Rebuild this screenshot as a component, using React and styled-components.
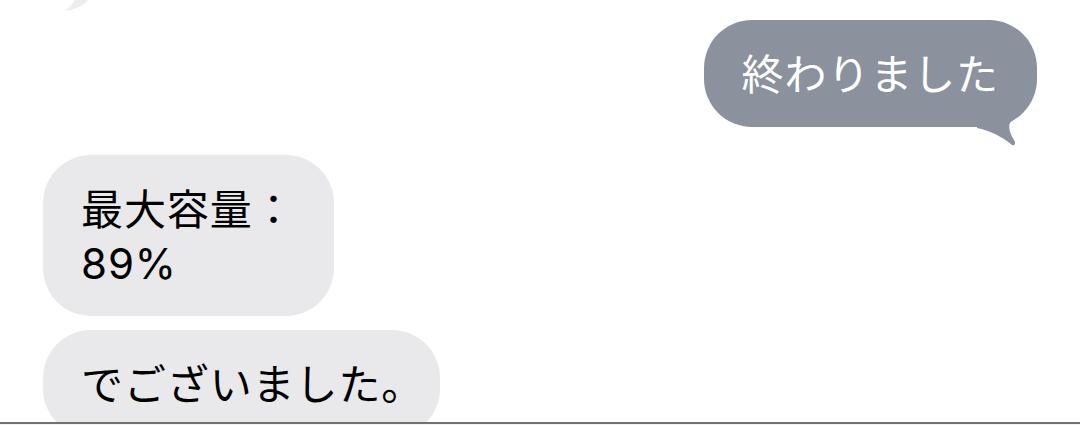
import styled, { createGlobalStyle } from 'styled-components';

const GlobalStyle = createGlobalStyle`
  html, body {
    margin: 0;
    padding: 0;
    background: #ffffff;
  }
  body {
    font-family: Inter, "Noto Sans CJK JP", sans-serif;
  }
`;

const Screen = styled.div`
  width: 1080px;
  height: 425px;
  display: flex;
  flex-direction: column;
  overflow: hidden;
  background: #ffffff;
`;

const Thread = styled.div`
  height: 422px;
  overflow: hidden;
  display: flex;
  flex-direction: column;
  padding: 0 43px;
`;

// tail of the previous (cut off) incoming bubble
const Sliver = styled.svg`
  display: block;
  margin-left: 20px;
  flex-shrink: 0;
`;

const Row = styled.div`
  display: flex;
  justify-content: ${(p) => (p.$mine ? 'flex-end' : 'flex-start')};
  margin-top: ${(p) => p.$gap}px;
  flex-shrink: 0;
`;

const Bubble = styled.div`
  position: relative;
  padding: 28px ${(p) => p.$endPad || 38}px 25px 38px;
  border-radius: 48px;
  background: ${(p) => (p.$mine ? '#8b929e' : '#e9e9eb')};
  color: ${(p) => (p.$mine ? '#ffffff' : '#000000')};
  font-size: 42px;
  line-height: 54px;
  letter-spacing: 0.9px;
  font-weight: 400;
  white-space: pre-line;
`;

const Tail = styled.svg`
  position: absolute;
  right: 0;
  bottom: -20px;
`;

const Footer = styled.div`
  height: 3px;
  border-top: 2px solid #727272;
  background: #f4f4f4;
  box-sizing: border-box;
`;

const messages = [
  { id: 1, mine: true, gap: 9, text: '終わりました' },
  { id: 2, mine: false, gap: 28, text: '最大容量：\n89%' },
  { id: 3, mine: false, gap: 14, text: 'でございました。', endPad: 16 },
];

const App = () => {
  return (
    <>
      <GlobalStyle />
      <Screen>
        <Thread>
          <Sliver width="26" height="11" viewBox="0 0 26 11">
            <path d="M12 0 L25 0 C21 5 14 9 2 11 C6 8 9 4 12 0 Z" fill="#ededef" />
          </Sliver>
          {messages.map((m) => (
            <Row key={m.id} $mine={m.mine} $gap={m.gap}>
              <Bubble $mine={m.mine} $endPad={m.endPad}>
                {m.text}
                {m.mine && (
                  <Tail width="60" height="50" viewBox="0 0 60 50">
                    <path
                      d="M0 20 L0 31 C12 33 26 40 35 48 C38 49 39 46 37 43 C33 37 31 30 33 26 C38 18 47 10 53 0 L0 0 Z"
                      fill="#8b929e"
                    />
                  </Tail>
                )}
              </Bubble>
            </Row>
          ))}
        </Thread>
        <Footer />
      </Screen>
    </>
  );
};

export default App;
